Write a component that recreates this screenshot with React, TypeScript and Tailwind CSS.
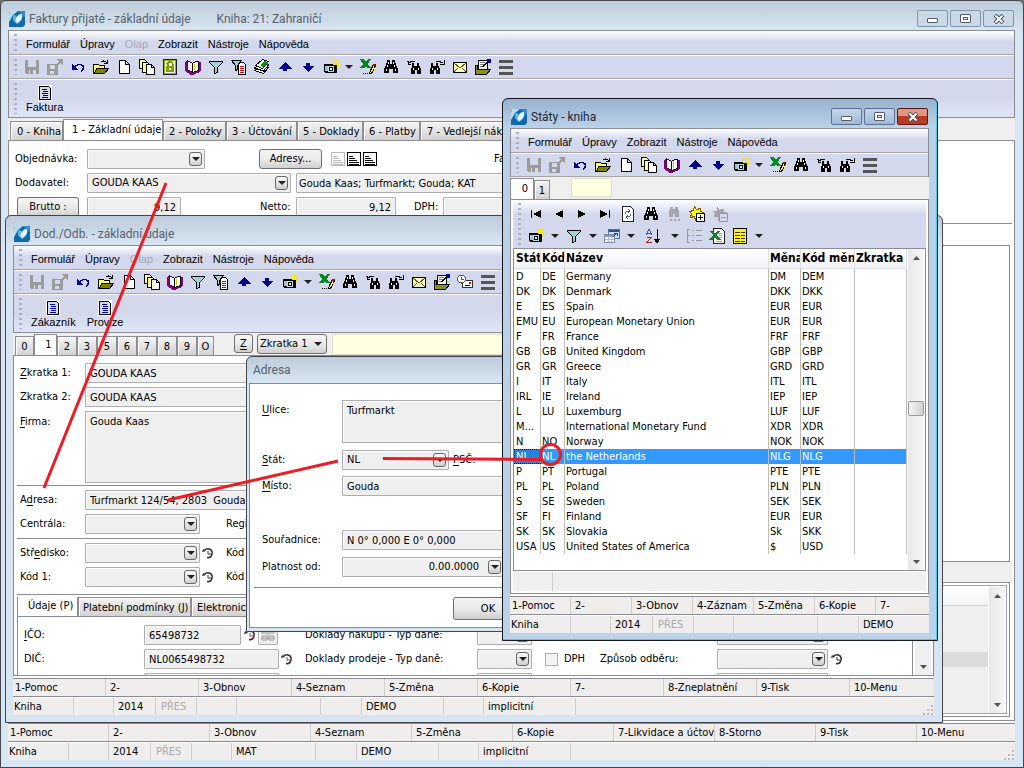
import type { ReactNode } from "react";

type State = [string, string, string, string, string];

const states: State[] = [
  ["D", "DE", "Germany", "DM", "DEM"],
  ["DK", "DK", "Denmark", "DKK", "DKK"],
  ["E", "ES", "Spain", "EUR", "EUR"],
  ["EMU", "EU", "European Monetary Union", "EUR", "EUR"],
  ["F", "FR", "France", "FRF", "FRF"],
  ["GB", "GB", "United Kingdom", "GBP", "GBP"],
  ["GR", "GR", "Greece", "GRD", "GRD"],
  ["I", "IT", "Italy", "ITL", "ITL"],
  ["IRL", "IE", "Ireland", "IEP", "IEP"],
  ["L", "LU", "Luxemburg", "LUF", "LUF"],
  ["M...", "", "International Monetary Fund", "XDR", "XDR"],
  ["N", "NO", "Norway", "NOK", "NOK"],
  ["NL", "NL", "the Netherlands", "NLG", "NLG"],
  ["P", "PT", "Portugal", "PTE", "PTE"],
  ["PL", "PL", "Poland", "PLN", "PLN"],
  ["S", "SE", "Sweden", "SEK", "SEK"],
  ["SF", "FI", "Finland", "EUR", "EUR"],
  ["SK", "SK", "Slovakia", "Sk", "SKK"],
  ["USA", "US", "United States of America", "$", "USD"],
];

const binoculars = (
  <>
    <path d="M4 1h3v4h2V1h3v3h1v3h1v2h1v5h-5v-4H6v4H1V9h1V7h1V4h1z" fill="#000" />
    <path d="M5 3h1v2H5zM4 6h1v2H4zM3 10h1v2H3zM10 3h1v2h-1zM11 6h1v2h-1zM12 10h1v2h-1z" fill="#fff" />
  </>
);

const smallBinoculars = (
  <>
    <path d="M4 4h2v3h3V4h2v3h1v2h1v6H9v-4H7v4H3V9h1z" fill="#000" />
    <path d="M5 9h1v2H5zM10 9h1v2h-1z" fill="#fff" />
  </>
);

const funnel = <path d="M1.5 2.5h13v1l-5 5v5l-3 1v-6l-5-5z" fill="#9fd3d8" stroke="#000" />;

const icons: Record<string, ReactNode> = {
  save: (
    <>
      <path d="M1 1h14v14H2l-1-1z" fill="#9b9b9b" />
      <path d="M4 1h8v7H4zM5 11h7v4H5z" fill="#d3d8ec" />
      <path d="M6 11h3v4H6z" fill="#9b9b9b" />
    </>
  ),
  saveOut: (
    <>
      <path d="M0 5h11v11H0z" fill="#9b9b9b" />
      <path d="M3 6h5v4H3zM3 12h4v3H3z" fill="#d3d8ec" />
      <path d="M10 0h6v6h-1L13.500 4 10 7.500 8.500 6 12 2.500z" fill="#9b9b9b" />
    </>
  ),
  undo: (
    <>
      <path d="M4 8.500c2-3 7-4.500 9-1.500 1 2 0 4-2 5" fill="none" stroke="#000090" strokeWidth="1.500" />
      <path d="M2 5v6h6z" fill="#000090" />
    </>
  ),
  open: (
    <>
      <path d="M0.500 14V5.500h5l1 1h5v3" fill="#ffff66" stroke="#000" />
      <path d="M1 14.500l3-5h11.500l-4 5z" fill="#808000" stroke="#000" />
      <path d="M8 3c2-2 4-1 6 1M14.500 1v3.500H11" fill="none" stroke="#000" />
    </>
  ),
  page: <path d="M3.500 1.500h6l4 4v9h-10zM9.500 1.500v4h4" fill="#fff" stroke="#000" />,
  pages: (
    <>
      <path d="M0.500 0.500h5l2 2v7h-7z" fill="#ffff99" stroke="#000" />
      <path d="M3.500 3.500h5l2 2v8h-7z" fill="#ffff99" stroke="#000" />
      <path d="M7.500 5.500h5l3 3v7h-8zM12.500 5.500v3h3" fill="#fff" stroke="#000" />
    </>
  ),
  lock: (
    <>
      <path d="M1.500 0.500h13v15h-13z" fill="#fff" stroke="#222" />
      <path d="M2.500 1.500h11v13h-11z" fill="#fff" stroke="#8db600" />
      <path d="M4 7h8v6H4z" fill="#7aa300" />
      <path d="M5.500 7V4.500c0-2 5-2 5 0V7" fill="none" stroke="#7aa300" strokeWidth="2" />
      <path d="M7 9h2v2H7z" fill="#fff" />
    </>
  ),
  book: (
    <>
      <path d="M0 3l2-2v9l5 3 7-2h2l-1 2-7 3-2 0-6-4z" fill="#800080" />
      <path d="M2.500 1.500l5 3v9l-5-3z" fill="#fff" stroke="#400040" />
      <path d="M7.500 4.500l3-2h3v9l-6 2z" fill="#fff" stroke="#000" />
      <path d="M9.500 5v6" stroke="#c8c800" />
      <path d="M15 3v9" stroke="#800080" strokeWidth="2" />
    </>
  ),
  funnel,
  funnelPage: (
    <>
      <path d="M7.500 3.500h5l2 2v10h-7z" fill="#fff" stroke="#000" />
      <path d="M0.500 1.500h10l-4 5v4l-2 1v-5z" fill="#9fd3d8" stroke="#000" />
      <path d="M9 7.500h4M9 9.500h4M9 11.500h4M9 13.500h4" stroke="#d00000" />
    </>
  ),
  stack: (
    <>
      <path d="M0.500 11.500l5-4 9 1-5 6z" fill="#fff" stroke="#000" />
      <path d="M0.500 9l5-4 9 1-5 6z" fill="#fff" stroke="#000" />
      <path d="M1.500 6.500l7-6 6 2-6 7z" fill="#fff" stroke="#000" />
      <path d="M6 6l4-4 4 1v4l-2-2-3 3z" fill="#00a000" />
    </>
  ),
  up: <path d="M8 3l6.500 6.500H10V12H6V9.500H1.500z" fill="#000090" />,
  down: <path d="M8 13L1.500 6.500H6V4h4v2.500h4.500z" fill="#000090" />,
  camera: (
    <>
      <path d="M1 5h11l2 1v8H2l-1-1z" fill="#000" />
      <path d="M2 7h3v5H2z" fill="#9fc9cc" />
      <circle cx="8" cy="10" r="3.500" fill="#b8dde0" />
      <circle cx="8" cy="10" r="2" fill="#fff" stroke="#000" />
      <path d="M9 1h2v2H9zM12 0h2v3h-2zM15 1h1v2h-1zM10 4h6v2h-6zM14 6h2v2h-2z" fill="#f6ea00" />
    </>
  ),
  excel: (
    <>
      <path d="M0 0h4l2 3 2-3h3L8 5l3 4H7L6 7 4 9H0l3-4z" fill="#008a20" />
      <path d="M9.500 14.500l1-3 3-6h2l-1 4-3 5z" fill="#ffff40" stroke="#000" />
      <path d="M13 5h2v2h-2z" fill="#e00000" />
      <path d="M3 14h1v1H3zM5 14h1v1H5zM7 14h1v1H7z" fill="#000" />
    </>
  ),
  find: binoculars,
  findPrev: (
    <>
      <g transform="translate(2 0)">{smallBinoculars}</g>
      <path d="M2 4V3h2V2h4v1M1 2h1v3h3" fill="none" stroke="#000" />
    </>
  ),
  findNext: (
    <>
      <g transform="translate(-2 0)">{smallBinoculars}</g>
      <path d="M7 3V2h4v1h2v1M15 1v4h-4" fill="none" stroke="#000" />
    </>
  ),
  mail: (
    <>
      <path d="M1.500 3.500h13v10h-13z" fill="#fdf9c0" stroke="#000" />
      <path d="M2 4l6 5 6-5M2 13l4-4M14 13l-4-4" fill="none" stroke="#5a5a20" />
    </>
  ),
  notes: (
    <>
      <path d="M3.500 1.500h9v9h-9z" fill="#fff" stroke="#000" />
      <path d="M5 3.500h5M5 5.500h5M5 7.500h4" stroke="#777" />
      <path d="M0.500 15.500v-9h2v4h13l-4 5z" fill="#8f8f10" stroke="#000" />
      <path d="M8 8l5-6" stroke="#000" strokeWidth="1.500" />
      <path d="M12 0h4v4h-3z" fill="#0000b0" />
    </>
  ),
  timeMail: (
    <>
      <path d="M5.500 6.500h10v7h-10z" fill="#fff" stroke="#333" />
      <circle cx="4.500" cy="5" r="4" fill="#fff" stroke="#555" />
      <path d="M4.500 2.500V5h2" stroke="#555" fill="none" />
      <path d="M12 8h2v2h-2z" fill="#e00000" />
      <path d="M8 11.500h5" stroke="#0000a0" />
    </>
  ),
  lines: <path d="M1 2h14M1 8h14M1 14h14" stroke="#555" strokeWidth="3" />,
  form: (
    <>
      <path d="M1 0h14v16H1z" fill="#fff" />
      <path d="M2.500 1.500h9l2 2v11h-11z" fill="#d3d8ec" stroke="#000" />
      <path d="M5 4.500h5M6 6.500h5M5 8.500h6M6 10.500h5M5 12.500h6" stroke="#000090" />
    </>
  ),
  first: <path d="M3 4h1v8H3zM13 4v8L5 8z" fill="#000" />,
  prev: <path d="M12 4v8L4 8z" fill="#000" />,
  next: <path d="M4 4v8l8-4z" fill="#000" />,
  last: <path d="M12 4h1v8h-1zM3 4v8l8-4z" fill="#000" />,
  refresh: (
    <>
      <path d="M2.500 0.500h8l3 3v12h-11z" fill="#fff" stroke="#222" />
      <path d="M5 8c0-2 2-3 4-3M8 3l2 2-2 2M11 8c0 2-2 3-4 3M8 13l-2-2 2-2" fill="none" stroke="#406080" />
    </>
  ),
  findGray: (
    <path d="M4 1h3v2h2V1h3v3h1v7h-4V8H7v3H3V4h1zM4 13h2v2H4zM8 13h2v2H8zM12 13h2v2h-2z" fill="#a5a5ad" />
  ),
  starAdd: (
    <>
      <path d="M5.500 0.500l2 3 4-1v3l3 1-3 2 1 4-4-1-2 3-1-4-4 1 1-4-2-2 4-1z" fill="#ffff30" stroke="#806000" />
      <path d="M7.500 7.500h8v8h-8zM9 11.500h5M11.500 9v5" fill="#fff" stroke="#000" />
    </>
  ),
  starRemove: (
    <>
      <path d="M5.500 0.500l2 3 4-1v3l3 1-3 2 1 4-4-1-2 3-1-4-4 1 1-4-2-2 4-1z" fill="#a5a5ad" />
      <path d="M7.500 7.500h8v8h-8zM9 11.500h5" fill="#d3d8ec" stroke="#999" />
    </>
  ),
  gridView: (
    <>
      <path d="M4.500 1.500h11v9h-11z" fill="#cfe0ff" stroke="#5070a0" />
      <path d="M5 2h10v2H5z" fill="#305090" />
      <path d="M0.500 6.500h10v8h-10z" fill="#fff" stroke="#8090a8" />
      <path d="M1 7h9v2H1z" fill="#7f9ccc" />
      <path d="M1 11.500h9M4.500 9v5M7.500 9v5" stroke="#b0bccc" />
      <path d="M9 9l4-4M10 5h3v3" fill="none" stroke="#1c3c80" />
    </>
  ),
  sort: (
    <>
      <path d="M1 7l3-6 3 6M2 5h4" fill="none" stroke="#3060a0" />
      <path d="M1.500 9.500h5l-5 5h5" fill="none" stroke="#a02020" />
      <path d="M12 1v12M9 11h6l-3 4z" stroke="#000" />
    </>
  ),
  tree: (
    <path d="M4 1H1v13h3M1 7h3M6 2.500h2M10 2.500h6M6 7.500h2M10 7.500h6M6 12.500h2M10 12.500h6" fill="none" stroke="#9a9aa2" />
  ),
  excelSheet: (
    <>
      <path d="M4.500 0.500h8l3 3v12h-11z" fill="#fff" stroke="#222" />
      <path d="M9 5h4v1H9zM10 7h3v1h-3zM10 9h3v1h-3zM7 13h6v1H7z" fill="#88b090" />
      <path d="M0 3h4l2 3 2-3h3L8 7l4 5H8L6 9l-2 3H0l4-5z" fill="#1d7a2c" />
    </>
  ),
  list: (
    <>
      <path d="M1.500 0.500h13v15h-13z" fill="#ffee20" stroke="#000" />
      <path d="M3 4.500h5M3 7.500h5M3 10.500h5M3 13.500h5M9 4.500h4M9 7.500h4M9 10.500h4M9 13.500h4" stroke="#333" />
    </>
  ),
  grayDoc: (
    <>
      <path d="M1.500 1.500h13v13h-13z" fill="#fff" stroke="#bbb" />
      <path d="M3 5.500h4M3 7.500h6M3 9.500h8M3 11.500h10M3 13h10" stroke="#bbb" />
    </>
  ),
  blackDoc: (
    <>
      <path d="M1.500 1.500h13v13h-13z" fill="#fff" stroke="#000" />
      <path d="M3 5.500h4M3 7.500h6M3 9.500h8M3 11.500h10M3 13h10" stroke="#000" />
    </>
  ),
};

function Icon({ name }: { name: string }) {
  return (
    <svg viewBox="0 0 16 16" className="h-4 w-4 shrink-0" shapeRendering="crispEdges" aria-hidden="true">
      {icons[name]}
    </svg>
  );
}

function Arrow() {
  return (
    <svg viewBox="0 0 8 4" className="h-1 w-2 shrink-0" aria-hidden="true">
      <path d="M0 0h8L4 4z" fill="#222" />
    </svg>
  );
}

function Logo() {
  return (
    <svg viewBox="0 0 16 16" className="h-4 w-4 shrink-0" aria-hidden="true">
      <path d="M1 0h15v14l-2 2H0V4z" fill="#1268ac" />
      <path d="M1 0h8L4 4 0 11V4z" fill="#b8dcf0" />
      <path d="M9 0h7v6z" fill="#2f8fd0" />
      <path d="M4 5c1-2 3-1 4 1 1-3 4-4 5-2 1 3-1 7-5 9-3-2-5-5-4-8z" fill="#5fb4e2" />
      <path d="M8 6c1-2 3-3 5-3 1 4-1 7-5 9-2-2-2-4 0-6z" fill="#e6f5fc" />
    </svg>
  );
}

function History({ red = false }: { red?: boolean }) {
  return (
    <svg viewBox="0 0 12 12" className="h-3 w-3 shrink-0" aria-hidden="true">
      <path d="M2 4c1-2 3-2.500 5-2s3.500 2.500 3 5-2.500 4-5 3.500" fill="none" stroke="#333" strokeWidth="1.500" />
      <path d="M6 4v3h3" fill="none" stroke={red ? "#e02030" : "#333"} strokeWidth="1" />
      <path d="M0 5l1-3 3 2z" fill="#333" />
    </svg>
  );
}

function Grip() {
  return (
    <span className="my-[3px] mr-[3px] ml-[5px] w-[3px] shrink-0 self-stretch bg-[repeating-linear-gradient(180deg,#adb0c0_0,#adb0c0_2px,transparent_2px,transparent_5px)]" />
  );
}

function WindowButtons({ active = false }: { active?: boolean }) {
  const base = "flex h-[17px] w-[31px] items-center justify-center rounded-[2px] border";
  const normal = active
    ? " border-[#5b7291] bg-linear-to-b from-[#c5d6ea] to-[#9fb9d6]"
    : " border-[#8494ac] bg-[#cbd8e6]";
  const close = active ? " border-[#5c1712] bg-linear-to-b from-[#e09585] from-45% to-[#bc3a22] to-50%" : normal;
  return (
    <div className="mr-px ml-auto flex gap-[2px]">
      <button type="button" aria-label="Minimalizovat" className={base + normal}>
        <span className="mt-1 h-[5px] w-[11px] rounded-[1px] border border-[#555d70] bg-white" />
      </button>
      <button type="button" aria-label="Maximalizovat" className={base + normal}>
        <span className="flex h-[9px] w-[11px] items-center justify-center rounded-[1px] border border-[#555d70] bg-white">
          <span className="h-[3px] w-[5px] border border-[#555d70]" />
        </span>
      </button>
      <button type="button" aria-label="Zavřít" className={base + close}>
        <svg viewBox="0 0 12 10" className="h-[10px] w-3">
          <path d="M2 1l8 8M10 1L2 9" stroke="#4b5263" strokeWidth="4" />
          <path d="M2.500 1.500l7 7M9.500 1.500l-7 7" stroke="#fff" strokeWidth="2" />
        </svg>
      </button>
    </div>
  );
}

function TitleBar({ title, subtitle, active }: { title: string; subtitle?: string; active?: boolean }) {
  return (
    <div className="flex h-[29px] shrink-0 items-center gap-1 pt-[6px] pl-px font-[Roboto,sans-serif] text-[12px]">
      <Logo />
      <h2 className={active ? "text-[#1c2733]" : "text-[#56626f]"}>{title}</h2>
      {subtitle && <span className="ml-[22px] text-[#56626f]">{subtitle}</span>}
      <WindowButtons active={active} />
    </div>
  );
}

function MenuBar({ items }: { items: string[] }) {
  return (
    <nav className="flex h-6 items-center border-b border-[#a5a5a5] bg-linear-to-b from-white to-[#d3d8ec] to-45%">
      <Grip />
      <div className="flex gap-[10px] pt-[2px] pl-[6px] font-['Liberation_Sans',sans-serif] text-[11px]">
        {items.map((item) => (
          <button key={item} type="button" disabled={item === "Olap"} className="disabled:text-[#a8aab5]">
            {item}
          </button>
        ))}
      </div>
    </nav>
  );
}

function ToolBar({ items }: { items: string[] }) {
  return (
    <div className="flex h-6 items-center border-t border-b border-t-white border-b-[#a5a5a5] bg-[#d3d8ec]">
      <Grip />
      {items.map((name, i) =>
        name === "arrow" ? (
          <button key={i} type="button" aria-label="Další" className="flex w-[14px] justify-center">
            <Arrow />
          </button>
        ) : (
          <button key={i} type="button" aria-label={name} className="flex w-[23px] justify-center">
            <Icon name={name} />
          </button>
        )
      )}
    </div>
  );
}

function FormBar({ items }: { items: string[] }) {
  return (
    <div className="flex h-[39px] border-t border-b border-t-white border-b-[#8c8c94] bg-linear-to-b from-[#d3d8ec] from-50% to-[#e0e4f6]">
      <Grip />
      <div className="flex gap-[11px] pt-[5px] pl-[6px] font-['Liberation_Sans',sans-serif] text-[11px] leading-[13px]">
        {items.map((item) => (
          <button key={item} type="button" className="flex flex-col items-center">
            <Icon name="form" />
            {item}
          </button>
        ))}
      </div>
    </div>
  );
}

const tabOn = "-mb-px flex h-[22px] items-center border border-b-0 border-[#8c8c94] bg-white pb-[2px] whitespace-nowrap";
const tabOff =
  "flex h-[19px] items-center border border-b-0 border-[#8c8c94] bg-linear-to-b from-[#f4f4f4] to-[#d2d2d2] pt-[2px] whitespace-nowrap shadow-[inset_1px_1px_0_#fff]";

function StatusBar({ keys, cells, wide }: { keys: string[]; cells: string[]; wide: string }) {
  const widths = [
    "w-[61px]", "w-[40px]", "w-[42px]", "w-[41px]", "w-[40px]", "w-[84px]", "w-[41px]", "w-[82px]", "w-[40px]", "w-[92px]",
  ];
  return (
    <footer className="shrink-0 overflow-hidden border-t-2 border-white bg-[#f0eded]">
      <div className="flex border-t border-[#8c8c94]">
        {keys.map((key) => (
          <button
            key={key}
            type="button"
            className={"h-[17px] shrink-0 overflow-hidden border-r border-[#d0cdcd] pl-1 text-left leading-[18px] whitespace-nowrap first:pl-[2px] last:border-0 " + wide}
          >
            {key}
          </button>
        ))}
      </div>
      <div className="border-t border-[#8c8c94]">
        <div className="flex h-[18px] border-t border-white leading-[18px]">
          {cells.map((cell, i) => (
            <span
              key={i}
              className={
                "shrink-0 overflow-hidden border-r border-[#d0cdcd] first:pl-px " +
                (cell === "PŘES" ? "pl-[5px] text-[#aaa] " : "pl-1 ") +
                (widths[i] || "")
              }
            >
              {cell}
            </span>
          ))}
          <svg viewBox="0 0 10 10" className="mt-[7px] mr-px ml-auto h-[10px] w-[10px] shrink-0" aria-hidden="true">
            <path d="M8 0h2v2H8zM4 4h2v2H4zM8 4h2v2H8zM0 8h2v2H0zM4 8h2v2H4zM8 8h2v2H8z" fill="#bbb" />
          </svg>
        </div>
      </div>
    </footer>
  );
}

const box = "border border-[#adadb2] bg-[#efefef] shadow-[inset_1px_1px_0_#fff]";

function Field({ id, value, className = "" }: { id: string; value?: string; className?: string }) {
  return <input id={id} defaultValue={value} className={"h-5 min-w-0 rounded-[1px] px-1 outline-none " + box + " " + className} />;
}

function Combo({ id, value = "", className = "" }: { id: string; value?: string; className?: string }) {
  return (
    <div className={"flex h-5 shrink-0 items-center rounded-[1px] pr-[2px] " + box + " " + className}>
      <select id={id} defaultValue={value} className="h-full min-w-0 flex-1 appearance-none pl-1 outline-none">
        <option>{value}</option>
      </select>
      <span className="pointer-events-none flex h-[14px] w-[13px] items-center justify-center rounded-[3px] border border-[#666] bg-linear-to-b from-[#fafafa] to-[#d0d0d0]">
        <Arrow />
      </span>
    </div>
  );
}

const button = "shrink-0 rounded-[3px] border border-[#707070] bg-linear-to-b from-[#f4f4f4] via-[#ebebeb] to-[#cfcfcf]";

function Hot({ text, at = 0 }: { text: string; at?: number }) {
  return (
    <>
      {text.slice(0, at)}
      <u className="underline-offset-2">{text[at]}</u>
      {text.slice(at + 1)}
    </>
  );
}

function ScrollArrow({ up = false }: { up?: boolean }) {
  return (
    <button type="button" aria-label={up ? "Nahoru" : "Dolů"} className="flex h-[17px] items-center justify-center">
      <svg viewBox="0 0 7 4" className="h-1 w-[7px]">
        <path d={up ? "M0 4h7L3.500 0z" : "M0 0h7L3.500 4z"} fill="#555" />
      </svg>
    </button>
  );
}

const menu = ["Formulář", "Úpravy", "Olap", "Zobrazit", "Nástroje", "Nápověda"];

function InvoiceForm() {
  return (
    <>
      <div className="flex h-[22px] shrink-0 items-end bg-[#efefef] pl-[2px]">
        <button type="button" className={tabOff + " w-[53px] pl-[6px]"}>0 - Kniha</button>
        <button type="button" className={tabOn + " w-[100px] pl-[8px]"}>1 - Základní údaje</button>
        <button type="button" className={tabOff + " w-[63px] pl-[5px]"}>2 - Položky</button>
        <button type="button" className={tabOff + " w-[71px] pl-[5px]"}>3 - Účtování</button>
        <button type="button" className={tabOff + " w-[66px] pl-[5px]"}>5 - Doklady</button>
        <button type="button" className={tabOff + " w-[57px] pl-[5px]"}>6 - Platby</button>
        <button type="button" className={tabOff + " w-[110px] pl-[6px]"}>7 - Vedlejší náklady</button>
      </div>
      <div className="flex flex-1 flex-col border border-[#8c8c94] bg-white">
        <div className="flex flex-col gap-1 pt-2 pl-[6px]">
          <div className="flex h-5 items-center">
            <label htmlFor="order" className="w-[72px]">Objednávka:</label>
            <Combo id="order" className="w-[118px]" />
            <button type="button" className={button + " ml-[54px] h-5 w-[63px]"}>Adresy...</button>
            <div className="ml-2 flex w-[164px]">
              <Icon name="grayDoc" />
              <Icon name="blackDoc" />
              <Icon name="blackDoc" />
            </div>
            <span>Faktura:</span>
          </div>
          <div className="flex h-5 items-center">
            <label htmlFor="supplier" className="w-[72px]">Dodavatel:</label>
            <Combo id="supplier" value="GOUDA KAAS" className="w-[204px]" />
            <Field id="supplierName" value="Gouda Kaas; Turfmarkt; Gouda; KAT" className="ml-[5px] w-[320px] pl-[2px]" />
          </div>
          <div className="flex h-5 items-center">
            <button type="button" className={button + " ml-[2px] h-5 w-[62px]"}>Brutto :</button>
            <Field id="gross" value="9,12" className="ml-2 w-[94px] text-right" />
            <label htmlFor="net" className="ml-[79px] w-[36px]">Netto:</label>
            <Field id="net" value="9,12" className="w-[100px] text-right" />
            <label htmlFor="vat" className="ml-[18px] w-[29px]">DPH:</label>
            <Field id="vat" className="w-[100px]" />
          </div>
        </div>
        <hr className="mt-[6px] mr-[2px] border-[#8c8c94]" />
        <div className="mt-[21px] mr-1 h-[317px] border border-[#8c8c94]" />
        <div className="mr-[2px] h-5 bg-[#efefef]" />
        <div className="mr-1 mb-[3px] flex flex-1 border border-[#8c8c94] p-[2px]">
          <div className="flex flex-1 border border-[#a5a5ad] pt-px">
            <div className="flex flex-1 flex-col bg-[#efefef]">
              <div className="h-[19px] border-b border-[#d0d4dc] bg-linear-to-b from-white to-[#f1f2f5]" />
              <div className="mt-[46px] h-[15px] bg-[#dcdcdc]" />
            </div>
            <div className="mr-px ml-px flex w-4 flex-col justify-between bg-linear-to-r from-[#e8e8e8] to-[#f6f6f6]">
              <ScrollArrow up />
              <ScrollArrow />
            </div>
          </div>
        </div>
      </div>
    </>
  );
}

function CompanyForm() {
  return (
    <>
      <div className="flex h-[22px] shrink-0 items-end bg-[#efefef] pl-[2px]">
        <button type="button" className={tabOff + " w-[19px] justify-center"}>0</button>
        <button type="button" className={tabOn + " w-[23px] justify-center pl-[6px]"}>1</button>
        {["2", "3", "5", "6", "7", "8", "9", "O"].map((n) => (
          <button key={n} type="button" className={tabOff + (n === "O" ? " w-[17px] justify-center" : " w-5 justify-center")}>{n}</button>
        ))}
        <button type="button" className={button + " mb-[2px] ml-[20px] h-[19px] w-[19px]"}>
          <Hot text="Z" />
        </button>
        <div className={button + " mb-px ml-1 flex h-5 w-[70px] items-center pr-1"}>
          <select aria-label="Řazení" className="min-w-0 flex-1 appearance-none pl-[2px] outline-none">
            <option>Zkratka 1</option>
          </select>
          <Arrow />
        </div>
        <input aria-label="Hledat" className="ml-[5px] h-[21px] min-w-0 flex-1 border border-[#e0e0d0] bg-[#ffffe1]" />
      </div>
      <div className="flex flex-1 flex-col overflow-hidden border border-[#8c8c94] bg-white">
        <div className="flex flex-col gap-1 pt-[7px] pl-[6px]">
          <div className="flex items-center">
            <label htmlFor="short1" className="w-[65px]"><Hot text="Zkratka 1:" /></label>
            <Field id="short1" value="GOUDA KAAS" className="w-[400px]" />
          </div>
          <div className="flex items-center">
            <label htmlFor="short2" className="w-[65px]">Zkratka 2:</label>
            <Field id="short2" value="GOUDA KAAS" className="w-[400px]" />
          </div>
          <div className="flex">
            <label htmlFor="company" className="mt-1 w-[65px]"><Hot text="Firma:" /></label>
            <textarea id="company" defaultValue="Gouda Kaas" className={"h-[72px] w-[400px] resize-none px-1 py-[3px] " + box} />
          </div>
        </div>
        <hr className="mt-[2px] ml-[3px] border-[#8c8c94]" />
        <div className="flex flex-col gap-1 pt-1 pl-[6px]">
          <div className="flex items-center">
            <label htmlFor="address" className="w-[65px]"><Hot text="Adresa:" at={1} /></label>
            <Field id="address" value="Turfmarkt 124/54, 2803  Gouda, NL" className="w-[400px]" />
          </div>
          <div className="flex items-center">
            <label htmlFor="central" className="w-[65px]">Centrála:</label>
            <Combo id="central" className="w-[115px]" />
            <span className="ml-[26px]">Region:</span>
          </div>
        </div>
        <hr className="mt-1 ml-[3px] border-[#8c8c94]" />
        <div className="flex flex-col gap-1 pt-1 pl-[6px]">
          <div className="flex items-center">
            <label htmlFor="centre" className="w-[65px]"><Hot text="Středisko:" at={3} /></label>
            <Combo id="centre" className="mr-[2px] w-[115px]" />
            <History />
            <span className="ml-3">Kód 2:</span>
          </div>
          <div className="flex items-center">
            <label htmlFor="code1" className="w-[65px]">Kód 1:</label>
            <Combo id="code1" className="mr-[2px] w-[115px]" />
            <History />
            <span className="ml-3">Kód 3:</span>
          </div>
        </div>
        <hr className="mt-[7px] ml-[3px] border-[#8c8c94]" />
        <div className="mt-[2px] mr-[2px] ml-[3px] flex flex-1 overflow-hidden">
          <div className="flex flex-1 flex-col">
            <div className="flex h-[19px] items-end">
              <button type="button" className={tabOn + " w-[61px] pl-[10px]"}>Údaje (P)</button>
              <button type="button" className={tabOff + " w-[113px] pl-1"}>Platební podmínky (J)</button>
              <button type="button" className={tabOff + " w-[120px] pl-[5px]"}>Elektronické spojení</button>
            </div>
            <div className="flex flex-1 flex-col gap-1 border-t border-r border-l border-[#8c8c94] pt-2 pl-[6px]">
              <div className="flex items-center">
                <label htmlFor="ico" className="w-[120px]"><Hot text="IČO:" /></label>
                <Field id="ico" value="65498732" className="w-[97px]" />
                <div className="ml-[3px] flex w-[61px] items-center gap-[2px]">
                  <History red />
                  <button type="button" aria-label="Registr" className={box + " flex h-5 w-5 items-center justify-center rounded-[2px]"}>
                    <svg viewBox="0 0 14 12" className="h-3 w-[14px]">
                      <path d="M1 1h5v3H1zM8 1h5v3H8zM7 4v3M1 7h5v4H1zM8 7h5v4H8zM1 9h12" fill="none" stroke="#999" />
                    </svg>
                  </button>
                </div>
                <label htmlFor="purchase" className="w-[172px]">Doklady nákupu - Typ daně:</label>
                <Combo id="purchase" className="mr-[185px] w-[55px]" />
                <Combo id="kind" className="w-[111px]" />
              </div>
              <div className="flex items-center">
                <label htmlFor="dic" className="w-[120px]">DIČ:</label>
                <Field id="dic" value="NL0065498732" className="w-[135px]" />
                <div className="ml-[2px] w-6">
                  <History red />
                </div>
                <label htmlFor="sale" className="w-[172px]">Doklady prodeje - Typ daně:</label>
                <Combo id="sale" className="w-[55px]" />
                <input id="dph" type="checkbox" className="ml-[13px] h-[13px] w-[13px] appearance-none border border-[#adadb2] bg-[#f4f4f4]" />
                <label htmlFor="dph" className="ml-[6px] w-[36px]">DPH</label>
                <label htmlFor="pickup" className="w-[117px]">Způsob odběru:</label>
                <Combo id="pickup" className="mr-[3px] w-[111px]" />
                <History />
              </div>
              <div className="flex">
                <Field id="extra" className="ml-[120px] w-[135px]" />
                <Combo id="extraType" className="mr-[185px] ml-[198px] w-[55px]" />
                <Combo id="extraKind" className="w-[111px]" />
              </div>
            </div>
          </div>
          <div className="ml-[2px] flex w-4 flex-col justify-end bg-[#efefef]">
            <ScrollArrow />
          </div>
        </div>
      </div>
    </>
  );
}

function AddressDialog() {
  return (
    <section className="absolute top-[356px] left-[246px] flex h-[276px] w-[280px] flex-col rounded-t-[6px] border border-[#45454d] bg-[#d7e4f1] bg-linear-to-b from-[#bdcbda] to-[#d7e4f1] to-[25px] px-[2px] pb-[3px]">
      <h2 className="h-[26px] pt-[6px] pl-1 font-[Roboto,sans-serif] text-[12px] text-[#56626f]">Adresa</h2>
      <div className="flex-1 border border-[#8c8c94] bg-white pt-4 pl-3">
        <div className="flex">
          <label htmlFor="street" className="mt-[3px] w-20"><Hot text="Ulice:" /></label>
          <textarea id="street" defaultValue="Turfmarkt" className={"h-[43px] w-[180px] resize-none px-1 py-[3px] " + box} />
        </div>
        <div className="mt-[7px] flex items-center">
          <label htmlFor="state" className="w-20"><Hot text="Stát:" /></label>
          <Combo id="state" value="NL" className="mr-1 w-[107px]" />
          <span><Hot text="PSČ:" /></span>
        </div>
        <div className="mt-[6px] flex items-center">
          <label htmlFor="city" className="w-20"><Hot text="Místo:" /></label>
          <Field id="city" value="Gouda" className="w-[180px]" />
        </div>
        <div className="mt-[34px] flex items-center">
          <label htmlFor="coords" className="w-20">Souřadnice:</label>
          <Field id="coords" value="N 0° 0,000 E 0° 0,000" className="w-[180px]" />
        </div>
        <div className="mt-[7px] flex items-center">
          <label htmlFor="valid" className="w-20">Platnost od:</label>
          <Combo id="valid" value="0.00.0000" className="w-[162px] [&_select]:pr-[9px] [&_select]:[text-align-last:right]" />
        </div>
        <hr className="mt-[10px] -ml-2 border-[#8c8c94]" />
        <button type="button" className={button + " mt-[9px] ml-[191px] h-[23px] w-[70px]"}>OK</button>
      </div>
    </section>
  );
}

function IconButton({ name, className = "w-[23px]" }: { name: string; className?: string }) {
  return (
    <button type="button" aria-label={name} className={"flex justify-center " + className}>
      {name === "arrow" ? <Arrow /> : <Icon name={name} />}
    </button>
  );
}

function StatesGrid() {
  return (
    <>
      <div className="flex h-[22px] shrink-0 items-end bg-[#efefef]">
        <button type="button" className={tabOn + " w-6 justify-center pl-[6px]"}>0</button>
        <button type="button" className={tabOff + " w-4 justify-center"}>1</button>
        <input aria-label="Hledat" className="mb-[2px] ml-[21px] h-[19px] w-[41px] border border-[#e0e0d0] bg-[#ffffe1]" />
      </div>
      <div className="flex flex-1 flex-col border border-[#8c8c94] bg-white px-[2px] pb-[2px]">
        <div className="flex h-12 shrink-0 bg-linear-to-b from-white to-[#d3d8ec] to-30%">
          <Grip />
          <div className="flex flex-col gap-[6px] pt-[6px]">
            <div className="flex">
              {["first", "prev", "next", "last", "refresh", "find", "findGray", "starAdd", "starRemove"].map((name) => (
                <IconButton key={name} name={name} />
              ))}
            </div>
            <div className="flex items-center">
              <IconButton name="camera" className="w-6" />
              <IconButton name="arrow" className="w-[14px]" />
              <IconButton name="funnel" className="w-6" />
              <IconButton name="arrow" className="w-[14px]" />
              <IconButton name="gridView" className="w-6" />
              <IconButton name="arrow" className="w-[14px]" />
              <IconButton name="sort" className="w-[30px]" />
              <IconButton name="arrow" className="w-[14px]" />
              <IconButton name="tree" />
              <IconButton name="excelSheet" />
              <IconButton name="list" className="w-6" />
              <IconButton name="arrow" className="w-[14px]" />
            </div>
          </div>
        </div>
        <div className="flex flex-1 border border-[#8c8c94]">
          <div className="flex-1 overflow-hidden">
            <table className="w-full table-fixed border-separate border-spacing-0 text-left">
              <thead className="bg-linear-to-b from-white to-[#f1f2f5] text-[12px] leading-[19px]">
                <tr className="h-5 [&>th]:overflow-hidden [&>th]:border-r [&>th]:border-b [&>th]:border-[#dcdfe6] [&>th]:p-0 [&>th]:pl-px [&>th]:whitespace-nowrap [&>th:first-child]:pl-[2px]">
                  <th className="w-[27px]">Stát</th>
                  <th className="w-[24px]">Kód</th>
                  <th>Název</th>
                  <th className="w-[32px]">Měna</th>
                  <th className="w-[54px]">Kód měny</th>
                  <th className="w-[52px]">Zkratka</th>
                </tr>
              </thead>
              <tbody>
                {states.map((row) => (
                  <tr
                    key={row[0]}
                    className={
                      "h-[15px] leading-[15px] [&>td]:overflow-hidden [&>td]:border-r [&>td]:border-[#bbb] [&>td]:p-0 [&>td]:pl-px [&>td]:whitespace-nowrap [&>td:first-child]:pl-[2px]" +
                      (row[0] === "NL"
                        ? " bg-[#3399ff] text-white [&>td:first-child]:bg-[#2683e0] [&>td:first-child]:outline [&>td:first-child]:-outline-offset-1 [&>td:first-child]:outline-dotted [&>td:first-child]:outline-black"
                        : "")
                    }
                  >
                    {row.map((cell, i) => (
                      <td key={i}>{cell}</td>
                    ))}
                    <td />
                  </tr>
                ))}
              </tbody>
            </table>
          </div>
          <div className="mx-px flex w-4 flex-col bg-linear-to-r from-[#e8e8e8] to-[#f6f6f6]">
            <ScrollArrow up />
            <div className="mt-[135px] mb-auto h-[15px] rounded-[2px] border border-[#999] bg-linear-to-r from-[#f5f5f5] to-[#d0d0d0]" />
            <ScrollArrow />
          </div>
        </div>
        <div className="mt-px flex h-[19px] shrink-0 bg-[#efefef]">
          <span className="w-10 border-r border-[#d0cdcd]" />
        </div>
      </div>
    </>
  );
}

const inactiveFrame = "border-[#45454d] bg-[#d7e4f1] bg-linear-to-b from-[#bdcbda] to-[#d7e4f1] to-[28px]";
const companyTools = "save saveOut undo open page pages book funnel funnelPage up down camera arrow excel find findPrev findNext mail notes timeMail lines";

export default function App() {
  return (
    <div className="relative flex min-h-screen w-full flex-col overflow-hidden bg-[#6b6f78] font-['DejaVu_Sans_Condensed','DejaVu_Sans',sans-serif] text-[11px] leading-[14px] text-black">
      <main className={"flex flex-1 flex-col rounded-t-[6px] border pr-2 pb-[7px] pl-[7px] " + inactiveFrame}>
        <TitleBar title="Faktury přijaté - základní údaje" subtitle="Kniha: 21: Zahraničí" />
        <div className="border-t border-r border-l border-[#8c8c94]">
          <MenuBar items={menu} />
          <ToolBar
            items={"save saveOut undo open page pages lock book funnel funnelPage stack up down camera arrow excel find findPrev findNext mail notes lines".split(" ")}
          />
          <FormBar items={["Faktura"]} />
        </div>
        <InvoiceForm />
        <StatusBar
          wide="w-[101px]"
          keys={["1-Pomoc", "2-", "3-Obnov", "4-Seznam", "5-Změna", "6-Kopie", "7-Likvidace a účtová", "8-Storno", "9-Tisk", "10-Menu"]}
          cells={["Kniha", "", "2014", "PŘES", "", "MAT", "", "DEMO", "", "implicitní"]}
        />
      </main>

      <section className={"absolute top-[215px] left-[5px] flex h-[508px] w-[938px] flex-col rounded-t-[6px] border pr-2 pb-[7px] pl-[7px] " + inactiveFrame}>
        <TitleBar title="Dod./Odb. - základní údaje" />
        <div className="border-t border-r border-l border-[#8c8c94]">
          <MenuBar items={menu} />
          <ToolBar items={companyTools.split(" ")} />
          <FormBar items={["Zákazník", "Provize"]} />
        </div>
        <CompanyForm />
        <StatusBar
          wide="w-[93px]"
          keys={["1-Pomoc", "2-", "3-Obnov", "4-Seznam", "5-Změna", "6-Kopie", "7-", "8-Zneplatnění", "9-Tisk", "10-Menu"]}
          cells={["Kniha", "", "2014", "PŘES", "", "", "", "DEMO", "", "implicitní"]}
        />
      </section>

      <AddressDialog />

      <section className="absolute top-[98px] left-[502px] flex h-[543px] w-[436px] flex-col rounded-t-[6px] border border-[#15181c] bg-[#bad1ea] bg-linear-to-b from-[#98b2cf] to-[#bad1ea] to-[28px] pr-2 pb-[7px] pl-[7px] shadow-[inset_-1px_-1px_0_#3fd0ea]">
        <TitleBar title="Státy - kniha" active />
        <div className="border-t border-r border-l border-[#8c8c94]">
          <MenuBar items={menu.filter((item) => item !== "Olap")} />
          <ToolBar items={"save saveOut undo open page pages book up down camera arrow excel find findPrev findNext lines".split(" ")} />
        </div>
        <StatesGrid />
        <StatusBar
          wide="w-[61px]"
          keys={["1-Pomoc", "2-", "3-Obnov", "4-Záznam", "5-Změna", "6-Kopie", "7-"]}
          cells={["Kniha", "", "2014", "PŘES", "", "", "", "DEMO"]}
        />
      </section>

      {/* links between the same value in the four windows */}
      <svg className="pointer-events-none absolute top-0 left-0 h-[768px] w-[1024px]" viewBox="0 0 1024 768" aria-hidden="true">
        <g fill="none" stroke="#ed1c24" strokeWidth="3">
          <path d="M166 183L44 488M168 500L338 461M383 458.500L542 459.500" />
          <circle cx="550.500" cy="454.500" r="10" />
        </g>
      </svg>
    </div>
  );
}
